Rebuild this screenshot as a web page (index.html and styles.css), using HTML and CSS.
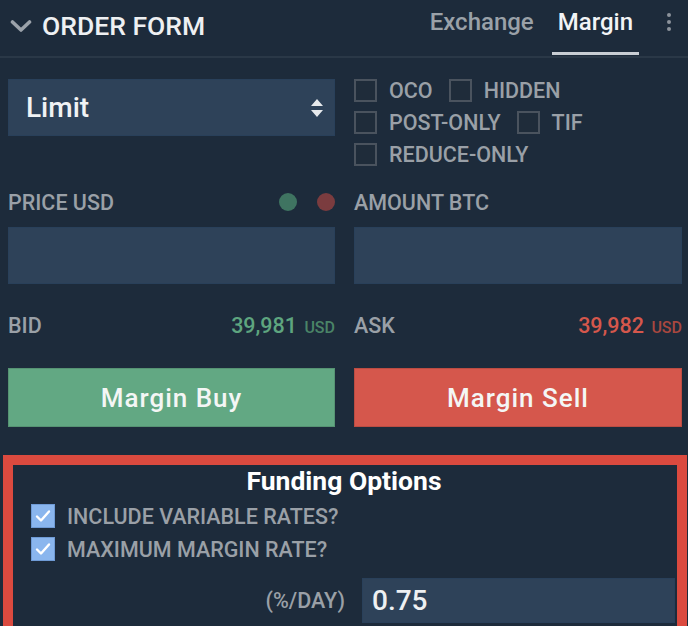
FILE: index.html
```html
<!DOCTYPE html>
<html lang="en">
<head>
<meta charset="utf-8">
<title>Order Form</title>
<link rel="stylesheet" href="styles.css">
</head>
<body>
<div class="panel">
  <header class="header">
    <div class="title">
      <svg class="chev" width="22" height="14" viewBox="0 0 22 14"><path d="M2.5 3 L11 11 L19.5 3" fill="none" stroke="#9ba2aa" stroke-width="3.6" stroke-linecap="round" stroke-linejoin="round"/></svg>
      <span>ORDER FORM</span>
    </div>
    <nav class="tabs">
      <span class="tab">Exchange</span>
      <span class="tab active">Margin</span>
      <span class="more"><i></i><i></i><i></i></span>
    </nav>
  </header>

  <div class="content">
    <div class="grid">
      <div class="select">
        <span>Limit</span>
        <svg width="14" height="22" viewBox="0 0 14 22"><path d="M7 2 L13 9 H1 Z M7 20 L13 13 H1 Z" fill="#e6e9ec"/></svg>
      </div>
      <div class="flags">
        <div class="flagrow"><label class="flag"><span class="box"></span>OCO</label><label class="flag"><span class="box"></span>HIDDEN</label></div>
        <div class="flagrow"><label class="flag"><span class="box"></span>POST-ONLY</label><label class="flag"><span class="box"></span>TIF</label></div>
        <div class="flagrow"><label class="flag"><span class="box"></span>REDUCE-ONLY</label></div>
      </div>

      <div class="label-row"><span>PRICE USD</span><span class="dots"><i class="dot green"></i><i class="dot red"></i></span></div>
      <div class="label-row"><span>AMOUNT BTC</span></div>

      <div class="input"></div>
      <div class="input"></div>

      <div class="quote"><span>BID</span><span class="val buy">39,981 <small>USD</small></span></div>
      <div class="quote"><span>ASK</span><span class="val sell">39,982 <small>USD</small></span></div>

      <button class="btn buy-btn">Margin Buy</button>
      <button class="btn sell-btn">Margin Sell</button>
    </div>
  </div>

  <section class="funding">
    <h2>Funding Options</h2>
    <label class="check"><span class="cbox"><svg width="16" height="14" viewBox="0 0 16 14"><path d="M2 7.5 L6 11.5 L14 2.5" fill="none" stroke="#fff" stroke-width="2.4" stroke-linecap="round" stroke-linejoin="round"/></svg></span>INCLUDE VARIABLE RATES?</label>
    <label class="check"><span class="cbox"><svg width="16" height="14" viewBox="0 0 16 14"><path d="M2 7.5 L6 11.5 L14 2.5" fill="none" stroke="#fff" stroke-width="2.4" stroke-linecap="round" stroke-linejoin="round"/></svg></span>MAXIMUM MARGIN RATE?</label>
    <div class="rate">
      <span class="unit">(%/DAY)</span>
      <div class="rate-input">0.75</div>
    </div>
  </section>
</div>
</body>
</html>
```

FILE: styles.css
```css
* { box-sizing: border-box; }
html, body {
  margin: 0;
  padding: 0;
  background: #1d2b3b;
  font-family: Roboto, "Liberation Sans", sans-serif;
  overflow: hidden;
}
.panel {
  width: 688px;
  height: 626px;
  background: #1d2b3b;
  overflow: hidden;
}
.header {
  height: 58px;
  border-bottom: 2px solid #2a3847;
  display: flex;
  align-items: stretch;
  justify-content: space-between;
}
.title {
  display: flex;
  align-items: center;
  padding-left: 10px;
  padding-bottom: 5px;
  gap: 10px;
  color: #eef0f2;
  font-size: 26.5px;
  font-weight: 500;
}
.tabs {
  display: flex;
  align-items: stretch;
  padding-right: 17px;
}
.tab {
  display: flex;
  align-items: center;
  padding: 0 6px 8px;
  margin-left: 12px;
  font-size: 24px;
  font-weight: 500;
  color: #9aa1a8;
  border-bottom: 3px solid transparent;
  margin-bottom: 1px;
}
.tab.active {
  color: #f2f4f6;
  border-bottom-color: #c9ced4;
}
.more {
  display: flex;
  flex-direction: column;
  gap: 3px;
  margin-left: 28px;
  padding-top: 13px;
}
.more i {
  display: block;
  width: 4px;
  height: 4px;
  border-radius: 50%;
  background: #8c939b;
}
.content {
  padding: 21px 6px 0 8px;
}
.grid {
  display: grid;
  grid-template-columns: 327px 328px;
  column-gap: 19px;
  align-items: start;
}
.select {
  height: 57px;
  background: #2e4259;
  border: 1px solid #29405a;
  display: flex;
  align-items: center;
  justify-content: space-between;
  padding: 0 10px 0 17px;
  color: #f0f2f4;
  font-size: 28px;
  font-weight: 500;
}
.flags {
  display: flex;
  flex-direction: column;
  gap: 9px;
}
.flagrow {
  display: flex;
  gap: 16px;
  height: 23px;
}
.flag {
  display: flex;
  align-items: center;
  gap: 12px;
  color: #9aa0a7;
  font-size: 21.5px;
  font-weight: 500;
  line-height: 23px;
}
.box {
  width: 23px;
  height: 23px;
  border: 2px solid #4a535e;
  background: #1f2c3a;
  flex: none;
}
.label-row {
  margin-top: 24px;
  height: 24px;
  display: flex;
  align-items: center;
  justify-content: space-between;
  color: #9aa0a7;
  font-size: 21.5px;
  font-weight: 500;
}
.dots {
  display: flex;
  gap: 20px;
}
.dot {
  width: 18px;
  height: 18px;
  border-radius: 50%;
  display: block;
}
.dot.green { background: #3f7461; }
.dot.red { background: #7b3c3f; }
.input {
  margin-top: 13px;
  height: 57px;
  background: #2e4259;
  border: 1px solid #29405a;
}
.quote {
  margin-top: 29px;
  height: 24px;
  display: flex;
  align-items: center;
  justify-content: space-between;
  color: #9aa0a7;
  font-size: 21.5px;
  font-weight: 500;
}
.val { font-size: 21.5px; font-weight: 500; }
.val small { font-size: 16px; font-weight: 500; margin-left: 2px; }
.val.buy { color: #5ea57f; }
.val.buy small { color: #4a8467; }
.val.sell { color: #d5574c; }
.val.sell small { color: #a8473f; }
.btn {
  margin-top: 31px;
  height: 59px;
  border: 1px solid rgba(0,0,0,0.12);
  font-family: Roboto, "Liberation Sans", sans-serif;
  font-size: 26px;
  font-weight: 500;
  letter-spacing: 1px;
  color: #f4f6f5;
  padding: 0;
}
.buy-btn { background: #62a883; }
.sell-btn { background: #d5574c; }
.funding {
  margin: 28px 1px 0 3px;
  border: 10px solid #db4a3f;
  border-bottom: none;
  height: 200px;
  padding: 0 2px 0 18px;
}
.funding h2 {
  margin: 0 0 0 -18px;
  padding-top: 2px;
  text-align: center;
  color: #ffffff;
  font-size: 26.5px;
  font-weight: 700;
  line-height: 28px;
  height: 39px;
}
.check {
  display: flex;
  align-items: center;
  gap: 12px;
  height: 24px;
  margin-bottom: 9px;
  color: #9aa0a7;
  font-size: 21.5px;
  font-weight: 500;
}
.cbox {
  width: 24px;
  height: 24px;
  background: #8ab6ee;
  border: 1px solid #6f9bd6;
  display: flex;
  align-items: center;
  justify-content: center;
  flex: none;
}
.rate {
  margin-top: 17px;
  margin-left: -18px;
  display: grid;
  grid-template-columns: 332px 1fr;
  align-items: center;
}
.unit {
  text-align: right;
  color: #9aa0a7;
  font-size: 21.5px;
  font-weight: 500;
}
.rate-input {
  margin-left: 17px;
  height: 45px;
  background: #2e4259;
  border: 1px solid #29405a;
  padding-left: 9px;
  display: flex;
  align-items: center;
  color: #eef0f2;
  font-size: 28px;
  font-weight: 500;
}
```
